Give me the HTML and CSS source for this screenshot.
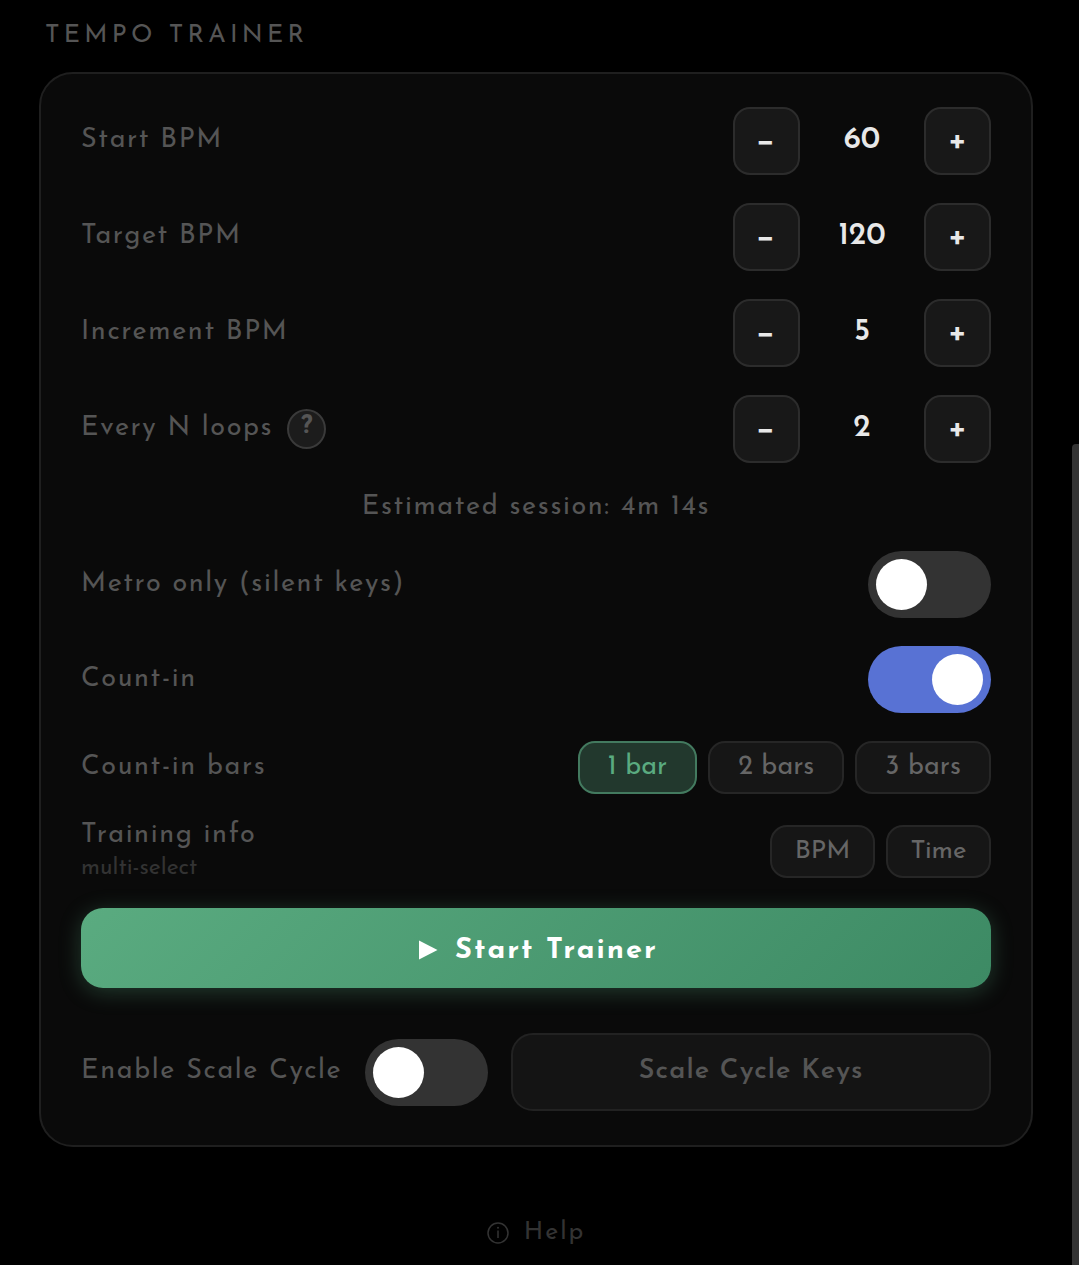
FILE: index.html
```html
<!DOCTYPE html>
<html lang="en">
<head>
  <meta charset="UTF-8" />
  <meta name="viewport" content="width=device-width, initial-scale=1.0" />
  <title>Tempo Trainer</title>
  <link rel="stylesheet" href="styles.css">
</head>
<body>
  <main class="container">
    <h2 class="section-title">Tempo Trainer</h2>

    <section class="card">
      <div class="row">
        <span class="label">Start BPM</span>
        <div class="stepper">
          <button class="step" aria-label="Decrease start BPM">−</button>
          <output class="value" id="startBpm">60</output>
          <button class="step" aria-label="Increase start BPM">+</button>
        </div>
      </div>

      <div class="row">
        <span class="label">Target BPM</span>
        <div class="stepper">
          <button class="step" aria-label="Decrease target BPM">−</button>
          <output class="value" id="targetBpm">120</output>
          <button class="step" aria-label="Increase target BPM">+</button>
        </div>
      </div>

      <div class="row">
        <span class="label">Increment BPM</span>
        <div class="stepper">
          <button class="step" aria-label="Decrease increment">−</button>
          <output class="value" id="incrementBpm">5</output>
          <button class="step" aria-label="Increase increment">+</button>
        </div>
      </div>

      <div class="row">
        <div class="label-group">
          <span class="label">Every N loops</span>
          <button class="hint" aria-label="About loops">?</button>
        </div>
        <div class="stepper">
          <button class="step" aria-label="Decrease loops">−</button>
          <output class="value" id="everyLoops">2</output>
          <button class="step" aria-label="Increase loops">+</button>
        </div>
      </div>

      <p class="estimate">Estimated session: 4m 14s</p>

      <div class="row">
        <label class="label" for="metroOnly">Metro only (silent keys)</label>
        <input class="toggle" type="checkbox" id="metroOnly">
      </div>

      <div class="row">
        <label class="label" for="countIn">Count-in</label>
        <input class="toggle" type="checkbox" id="countIn" checked>
      </div>

      <div class="row">
        <span class="label">Count-in bars</span>
        <div class="chips">
          <button class="chip active">1 bar</button>
          <button class="chip">2 bars</button>
          <button class="chip">3 bars</button>
        </div>
      </div>

      <div class="row info-row">
        <div class="label-stack">
          <span class="label">Training info</span>
          <small>multi-select</small>
        </div>
        <div class="chips">
          <button class="chip small">BPM</button>
          <button class="chip small">Time</button>
        </div>
      </div>

      <button class="start">
        <svg width="20" height="20" viewBox="0 0 20 20" aria-hidden="true"><path d="M1 0.5 L19.5 10 L1 19.5 Z" fill="currentColor"/></svg>
        <span>Start Trainer</span>
      </button>

      <div class="cycle-row">
        <label class="label" for="scaleCycle">Enable Scale Cycle</label>
        <input class="toggle" type="checkbox" id="scaleCycle">
        <button class="cycle-keys">Scale Cycle Keys</button>
      </div>
    </section>

    <a class="help" href="#help">
      <svg width="22" height="22" viewBox="0 0 22 22" fill="none" stroke="currentColor" aria-hidden="true">
        <circle cx="11" cy="11" r="10" stroke-width="1.5"/>
        <path d="M11 8.5V16" stroke-width="1.5"/>
        <circle cx="11" cy="5.8" r="1" fill="currentColor" stroke="none"/>
      </svg>
      <span>Help</span>
    </a>
  </main>
  <div class="scroll-thumb"></div>
</body>
</html>
```

FILE: styles.css
```css
* {
  box-sizing: border-box;
}

body {
  margin: 0;
  background: #000;
  color: #555;
  font-family: 'Josefin Sans', Lato, sans-serif;
  font-size: 27px;
  line-height: 32px;
}

button {
  font-family: inherit;
  padding: 0;
  cursor: pointer;
}

.container {
  padding: 20px 46px 16px 39px;
}

.section-title {
  margin: 0 0 20px 6px;
  font-size: 25px;
  font-weight: 400;
  letter-spacing: 0.17em;
  text-transform: uppercase;
}

.card {
  display: flex;
  flex-direction: column;
  gap: 28px;
  padding: 33px 40px 34px;
  background: #0a0a0a;
  border: 2px solid #1f1f1f;
  border-radius: 34px;
}

.row {
  display: flex;
  justify-content: space-between;
  align-items: center;
}

.label,
.estimate {
  letter-spacing: 0.06em;
}

.label-group {
  display: flex;
  align-items: center;
  gap: 14px;
}

.hint {
  width: 39px;
  height: 40px;
  padding-bottom: 4px;
  border: 2px solid #3a3a3a;
  border-radius: 50%;
  background: #1c1c1c;
  color: #555;
  font-size: 25px;
  font-weight: 700;
  line-height: 28px;
}

.stepper {
  display: flex;
  align-items: center;
}

.step {
  width: 67px;
  height: 68px;
  border: 2px solid #2c2c2c;
  border-radius: 17px;
  background: #181818;
  color: #e8e8e8;
  font-size: 36px;
  font-weight: 600;
}

.value {
  width: 124px;
  text-align: center;
  color: #e8e8e8;
  font-size: 31px;
  font-weight: 600;
}

.estimate {
  margin: 0;
  padding-top: 2px;
  line-height: 30px;
  text-align: center;
}

.toggle {
  appearance: none;
  flex: none;
  width: 123px;
  height: 67px;
  margin: 0;
  padding: 8px;
  border-radius: 34px;
  background: #333;
  cursor: pointer;
}

.toggle::before {
  content: "";
  display: block;
  width: 51px;
  height: 51px;
  border-radius: 50%;
  background: #fff;
}

.toggle:checked {
  background: #5872d4;
}

.toggle:checked::before {
  margin-left: auto;
}

.chips {
  display: flex;
  gap: 11px;
}

.chip {
  height: 53px;
  padding: 0 28px;
  border: 2px solid #262626;
  border-radius: 17px;
  background: #161616;
  color: #666;
  font-size: 27px;
}

.chip.active {
  border-color: #437a5f;
  background: #22382d;
  color: #5aab80;
}

.chip.small {
  min-width: 105px;
  padding: 0 20px;
  font-size: 26px;
}

.info-row {
  height: 58px;
}

.label-stack {
  display: flex;
  flex-direction: column;
  align-self: flex-start;
  gap: 4px;
}

.label-stack small {
  color: #333;
  font-size: 23px;
  line-height: 30px;
}

.info-row .label {
  line-height: 28px;
}

.start {
  display: flex;
  justify-content: center;
  align-items: center;
  gap: 17px;
  height: 80px;
  padding: 4px 0 0 4px;
  border: none;
  border-radius: 22px;
  background: linear-gradient(135deg, #5aab80, #3d8a64);
  box-shadow: 0 4px 22px rgba(90, 171, 128, 0.3);
  color: #fff;
  font-size: 29px;
  font-weight: 700;
  letter-spacing: 2px;
}

.cycle-row {
  display: flex;
  align-items: center;
  gap: 23px;
  margin-top: 17px;
}

.cycle-keys {
  flex: 1;
  height: 78px;
  padding-bottom: 2px;
  border: 2px solid #222;
  border-radius: 22px;
  background: #141414;
  color: #555;
  font-size: 27px;
  font-weight: 600;
  letter-spacing: 0.04em;
}

.help {
  display: flex;
  justify-content: center;
  align-items: center;
  gap: 15px;
  margin-top: 70px;
  color: #333;
  font-size: 25px;
  letter-spacing: 2px;
  text-decoration: none;
}

/* page scroll indicator */
.scroll-thumb {
  position: fixed;
  top: 444px;
  right: 0;
  bottom: 0;
  width: 7px;
  border-radius: 4px 0 0 0;
  background: #333;
}
```
